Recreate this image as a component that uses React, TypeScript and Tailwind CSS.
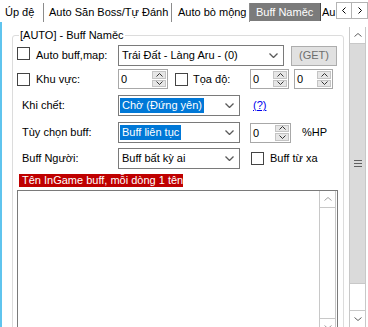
import React from "react";

function Chev({
  dir,
  w,
  h,
  color,
  sw = 1,
}: {
  dir: "up" | "down" | "left" | "right";
  w: number;
  h: number;
  color: string;
  sw?: number;
}) {
  let pts = "";
  if (dir === "down") pts = `0.5,0.5 ${w / 2},${h - 0.5} ${w - 0.5},0.5`;
  if (dir === "up") pts = `0.5,${h - 0.5} ${w / 2},0.5 ${w - 0.5},${h - 0.5}`;
  if (dir === "left") pts = `${w - 0.5},0.5 0.5,${h / 2} ${w - 0.5},${h - 0.5}`;
  if (dir === "right") pts = `0.5,0.5 ${w - 0.5},${h / 2} 0.5,${h - 0.5}`;
  return (
    <svg width={w} height={h} viewBox={`0 0 ${w} ${h}`} className="block">
      <polyline points={pts} fill="none" stroke={color} strokeWidth={sw} />
    </svg>
  );
}

function Check({ className = "" }: { className?: string }) {
  return <span className={"block w-[13px] h-[13px] border border-[#444] bg-white shrink-0 " + className} />;
}

function Combo({ className, text, hl }: { className: string; text: string; hl?: boolean }) {
  return (
    <div className={"flex items-center justify-between h-[21px] border border-[#7a7a7a] bg-white shrink-0 pr-[5px] " + className}>
      {hl ? (
        <span className="ml-[1px] bg-[#0078d7] text-white px-[2px] leading-[15px] whitespace-nowrap">{text}</span>
      ) : (
        <span className="pl-[3px] whitespace-nowrap">{text}</span>
      )}
      <Chev dir="down" w={9} h={5} color="#5a5a5a" sw={1.3} />
    </div>
  );
}

function Spin({ className }: { className: string }) {
  return (
    <div className={"flex h-[20px] border border-[#a8a8a8] bg-white shrink-0 " + className}>
      <span className="flex-1 pl-[2px] leading-[18px]">0</span>
      <div className="flex flex-col w-[16px] gap-[1px] p-[1px]">
        <div className="flex-1 flex items-center justify-center bg-[#e6e6e6] border border-[#c4c4c4]">
          <Chev dir="up" w={7} h={4} color="#333" />
        </div>
        <div className="flex-1 flex items-center justify-center bg-[#e6e6e6] border border-[#c4c4c4]">
          <Chev dir="down" w={7} h={4} color="#333" />
        </div>
      </div>
    </div>
  );
}

export default function App() {
  return (
    <div className="w-[368px] h-[327px] overflow-hidden bg-white text-[11px] text-black font-['Liberation_Sans',Arial,sans-serif] flex flex-col">
      {/* Tab strip */}
      <div className="flex h-[22px] shrink-0 whitespace-nowrap">
        <div className="mt-[3px] h-[19px] w-[44px] pl-[5px] border-r border-[#8c8c8c] leading-[18px]">Úp đệ</div>
        <div className="mt-[3px] h-[19px] w-[128px] pl-[5px] border-r border-[#8c8c8c] leading-[18px]">Auto Săn Boss/Tự Đánh</div>
        <div className="mt-[3px] h-[19px] w-[78px] pl-[6px] border-r border-[#8c8c8c] leading-[18px]">Auto bò mộng</div>
        <div className="mt-[3px] h-[18px] w-[71px] pl-[6px] bg-[#7b7b7b] text-white border-r border-[#4a4a4a] leading-[18px]">Buff Naměc</div>
        <div className="mt-[3px] h-[19px] w-[15px] pl-[1px] overflow-hidden leading-[18px]">Au</div>
        <div className="mt-[2px] h-[17px] w-[16px] flex items-center justify-center border border-[#b4b4b4] bg-white">
          <Chev dir="left" w={4} h={7} color="#000" />
        </div>
        <div className="mt-[2px] h-[17px] w-[16px] flex items-center justify-center border border-l-0 border-[#b4b4b4] bg-white">
          <Chev dir="right" w={4} h={7} color="#000" />
        </div>
      </div>

      {/* Body */}
      <div className="flex flex-1 min-h-0">
        <div className="w-[2px] bg-[#5fc4ee] shrink-0" />
        <div className="w-[347px] shrink-0 pl-[10px] pt-[7px]">
          <fieldset className="w-[332px] h-[340px] border border-[#dcdcdc] rounded-[3px]">
            <legend className="ml-[6px] px-[1px] leading-[13px]">[AUTO] - Buff Naměc</legend>
            <div className="flex flex-col pl-[4px]">
              {/* Row 1 */}
              <div className="flex items-center h-[21px] mt-[3px]">
                <Check className="self-start mt-[2px]" />
                <span className="ml-[6px] w-[82px] shrink-0">Auto buff,map:</span>
                <Combo className="w-[166px]" text="Trái Đất - Làng Aru - (0)" />
                <div className="ml-[7px] w-[46px] h-[20px] flex items-center justify-center bg-[#e1e1e1] border border-[#adadad] text-[#6d6d6d]">
                  (GET)
                </div>
              </div>
              {/* Row 2 */}
              <div className="flex items-center h-[20px] mt-[3px]">
                <Check />
                <span className="ml-[6px] w-[82px] shrink-0">Khu vực:</span>
                <Spin className="w-[50px]" />
                <Check className="ml-[7px]" />
                <span className="ml-[5px] w-[57px] shrink-0">Tọa độ:</span>
                <Spin className="w-[39px]" />
                <Spin className="ml-[5px] w-[39px]" />
              </div>
              {/* Row 3 */}
              <div className="flex items-center h-[21px] mt-[6px]">
                <span className="pl-[5px] w-[101px] shrink-0">Khi chết:</span>
                <Combo className="w-[122px]" text="Chờ (Đứng yên)" hl />
                <span className="ml-[13px] text-[#0000ee] underline">(?)</span>
              </div>
              {/* Row 4 */}
              <div className="flex items-center h-[21px] mt-[6px]">
                <span className="pl-[5px] w-[101px] shrink-0">Tùy chọn buff:</span>
                <Combo className="w-[122px]" text="Buff liên tục" hl />
                <Spin className="ml-[10px] w-[41px]" />
                <span className="ml-[11px]">%HP</span>
              </div>
              {/* Row 5 */}
              <div className="flex items-center h-[21px] mt-[5px]">
                <span className="pl-[5px] w-[101px] shrink-0">Buff Người:</span>
                <Combo className="w-[122px]" text="Buff bất kỳ ai" />
                <Check className="ml-[11px]" />
                <span className="ml-[6px]">Buff từ xa</span>
              </div>
              {/* Red bar */}
              <div className="mt-[5px] ml-[2px] w-[164px] h-[13px] bg-[#bf0000] text-white leading-[13px] pl-[3px] whitespace-nowrap">
                Tên InGame buff, mỗi dòng 1 tên
              </div>
              {/* Textarea */}
              <div className="mt-[3px] w-[321px] h-[150px] border border-[#7a7a7a] bg-white flex justify-end pr-[1px]">
                <div className="w-[17px] flex flex-col border-x border-[#c8c8c8]">
                  <div className="h-[17px] flex items-center justify-center border-b border-[#c8c8c8]">
                    <Chev dir="up" w={8} h={4} color="#a0a0a0" />
                  </div>
                  <div className="h-[110px]" />
                  <div className="h-[17px] flex items-center justify-center border-t border-[#c8c8c8]">
                    <Chev dir="down" w={8} h={4} color="#a0a0a0" />
                  </div>
                </div>
              </div>
            </div>
          </fieldset>
        </div>

        {/* Main scrollbar */}
        <div className="w-[17px] mt-[5px] flex flex-col shrink-0 border-x border-[#c8c8c8]">
          <div className="h-[17px] shrink-0 flex items-center justify-center border-b border-[#c8c8c8] bg-white">
            <Chev dir="up" w={8} h={4} color="#606060" />
          </div>
          <div className="h-[239px] shrink-0 bg-[#dadada] flex items-center justify-center">
            <svg width="8" height="7" viewBox="0 0 8 7" className="block">
              <line x1="0" y1="0.5" x2="8" y2="0.5" stroke="#606060" />
              <line x1="0" y1="3.5" x2="8" y2="3.5" stroke="#606060" />
              <line x1="0" y1="6.5" x2="8" y2="6.5" stroke="#606060" />
            </svg>
          </div>
          <div className="h-[27px] shrink-0 bg-white border-t border-[#c8c8c8]" />
          <div className="h-[17px] shrink-0 flex items-center justify-center border-t border-[#c8c8c8] bg-white">
            <Chev dir="down" w={8} h={4} color="#606060" />
          </div>
        </div>
      </div>
    </div>
  );
}
